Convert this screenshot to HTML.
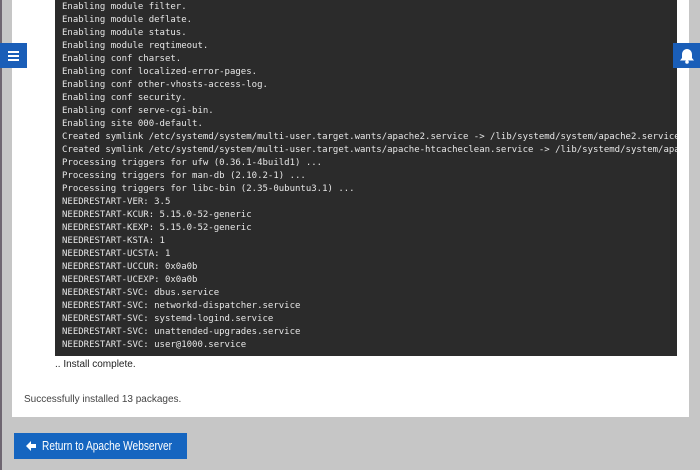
<!DOCTYPE html>
<html><head><style>
html,body{margin:0;width:700px;height:470px;overflow:hidden}
body{background:#c6c6c6;position:relative;font-family:"Liberation Sans",sans-serif}
.edge{position:absolute;left:0;top:0;width:2px;height:470px;background:#6e6570}
.panel{position:absolute;left:12px;top:0;width:677px;height:417px;background:#fff}
.term{position:absolute;left:43px;top:0;width:622px;height:356px;background:#2b2b2b;overflow:hidden}
pre{margin:0;position:absolute;left:7px;top:1px;font-family:"DejaVu Sans Mono","Liberation Mono",monospace;font-size:9px;line-height:13px;color:#e6e6e6;white-space:pre}
.ic{position:absolute;top:43px;width:27px;height:25px;background:#1a5eb8}
.btn{position:absolute;left:14px;top:433px;width:173px;height:26px;background:#1565c0;color:#fff;font-size:13px;line-height:26px;white-space:nowrap}
</style></head><body>
<div class="edge"></div>
<div class="panel">
<div class="term"><pre>Enabling module filter.
Enabling module deflate.
Enabling module status.
Enabling module reqtimeout.
Enabling conf charset.
Enabling conf localized-error-pages.
Enabling conf other-vhosts-access-log.
Enabling conf security.
Enabling conf serve-cgi-bin.
Enabling site 000-default.
Created symlink /etc/systemd/system/multi-user.target.wants/apache2.service -&gt; /lib/systemd/system/apache2.service.
Created symlink /etc/systemd/system/multi-user.target.wants/apache-htcacheclean.service -&gt; /lib/systemd/system/apache-htcacheclean.service.
Processing triggers for ufw (0.36.1-4build1) ...
Processing triggers for man-db (2.10.2-1) ...
Processing triggers for libc-bin (2.35-0ubuntu3.1) ...
NEEDRESTART-VER: 3.5
NEEDRESTART-KCUR: 5.15.0-52-generic
NEEDRESTART-KEXP: 5.15.0-52-generic
NEEDRESTART-KSTA: 1
NEEDRESTART-UCSTA: 1
NEEDRESTART-UCCUR: 0x0a0b
NEEDRESTART-UCEXP: 0x0a0b
NEEDRESTART-SVC: dbus.service
NEEDRESTART-SVC: networkd-dispatcher.service
NEEDRESTART-SVC: systemd-logind.service
NEEDRESTART-SVC: unattended-upgrades.service
NEEDRESTART-SVC: user@1000.service</pre></div>
<div style="position:absolute;left:43px;top:359px;font-size:10px;color:#222">.. Install complete.</div>
<div style="position:absolute;left:12px;top:394px;font-size:10px;color:#444">Successfully installed 13 packages.</div>
</div>
<div class="ic" style="left:0"><svg width="27" height="25"><rect x="8" y="8" width="11" height="2" fill="#fff"/><rect x="8" y="12" width="11" height="2" fill="#fff"/><rect x="8" y="16" width="11" height="2" fill="#fff"/></svg></div>
<div class="ic" style="left:673px"><svg width="27" height="25"><path d="M14 6c-3 0-5 2.5-5 5.5v3.5l-2 2.5h14l-2-2.5v-3.5c0-3-2-5.5-5-5.5z" fill="#fff"/><circle cx="14" cy="19" r="1.8" fill="#fff"/></svg></div>
<div class="btn"><svg width="12" height="12" style="position:absolute;left:11px;top:7px"><path d="M1 6l5-5v3h5v4h-5v3z" fill="#fff"/></svg><span style="position:absolute;left:28px;transform:scaleX(0.78);transform-origin:0 50%">Return to Apache Webserver</span></div>
</body></html>
